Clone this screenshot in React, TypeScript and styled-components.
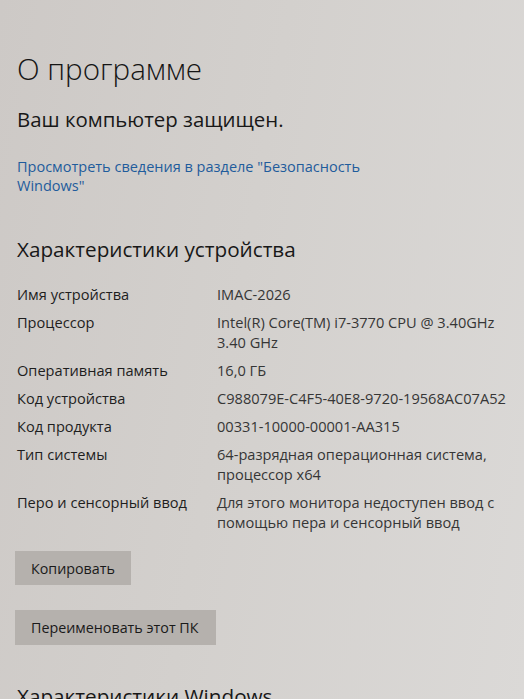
import React from "react";
import styled, { createGlobalStyle } from "styled-components";

const Global = createGlobalStyle`
  html, body { margin: 0; padding: 0; }
  body {
    background: #d3d0cd;
    font-family: "Open Sans", "Noto Sans", sans-serif;
    color: #1c1c1c;
  }
`;

const Page = styled.div`
  width: 524px;
  height: 699px;
  overflow: hidden;
  box-sizing: border-box;
  padding: 48px 0 0 17px;
  background: linear-gradient(100deg, #cdc9c6 0%, #d3d0cd 45%, #dbd9d7 100%);
`;

const Title = styled.h1`
  margin: 0;
  font-size: 29.6px;
  font-weight: 300;
  line-height: 42px;
  color: #151515;
`;

const Subtitle = styled.div`
  margin-top: 15px;
  font-size: 20.4px;
  line-height: 28px;
  color: #181818;
`;

const Link = styled.a`
  display: block;
  margin-top: 24px;
  width: 380px;
  font-size: 14.5px;
  line-height: 19px;
  color: #1f5c9c;
  text-decoration: none;
`;

const SectionTitle = styled.h2`
  margin: 39px 0 0;
  font-size: 20.7px;
  font-weight: 400;
  line-height: 30px;
  color: #181818;
`;

const Specs = styled.div`
  margin-top: 20px;
  display: grid;
  grid-template-columns: 200px 310px;
  row-gap: 8px;
  font-size: 14.6px;
  line-height: 20px;
`;

const Label = styled.div`
  color: #1e1e1e;
  white-space: nowrap;
`;

const Value = styled.div`
  color: #363636;
  white-space: nowrap;
`;

const Button = styled.button<{ $w: number; $h: number }>`
  display: block;
  width: ${(p) => p.$w}px;
  height: ${(p) => p.$h}px;
  margin-left: -2px;
  padding: 0 0 0 16px;
  text-align: left;
  border: none;
  background: #b5b1ad;
  font-family: "Open Sans", "Noto Sans", sans-serif;
  font-size: 14.3px;
  color: #1a1a1a;
`;

const Buttons = styled.div`
  margin-top: 19px;
  display: flex;
  flex-direction: column;
  gap: 25px;
`;

const BottomTitle = styled(SectionTitle)`
  margin-top: 36px;
`;

const specs: [string, string][] = [
  ["Имя устройства", "IMAC-2026"],
  ["Процессор", "Intel(R) Core(TM) i7-3770 CPU @ 3.40GHz\n3.40 GHz"],
  ["Оперативная память", "16,0 ГБ"],
  ["Код устройства", "C988079E-C4F5-40E8-9720-19568AC07A52"],
  ["Код продукта", "00331-10000-00001-AA315"],
  ["Тип системы", "64-разрядная операционная система,\nпроцессор x64"],
  ["Перо и сенсорный ввод", "Для этого монитора недоступен ввод с\nпомощью пера и сенсорный ввод"],
];

export default function App() {
  return (
    <>
      <Global />
      <Page>
        <Title>О программе</Title>
        <Subtitle>Ваш компьютер защищен.</Subtitle>
        <Link href="#">
          Просмотреть сведения в разделе "Безопасность
          <br />
          Windows"
        </Link>
        <SectionTitle>Характеристики устройства</SectionTitle>
        <Specs>
          {specs.map(([l, v]) => (
            <React.Fragment key={l}>
              <Label>{l}</Label>
              <Value>
                {v.split("\n").map((line, i) => (
                  <div key={i}>{line}</div>
                ))}
              </Value>
            </React.Fragment>
          ))}
        </Specs>
        <Buttons>
          <Button $w={116} $h={34}>Копировать</Button>
          <Button $w={201} $h={35}>Переименовать этот ПК</Button>
        </Buttons>
        <BottomTitle>Характеристики Windows</BottomTitle>
      </Page>
    </>
  );
}
